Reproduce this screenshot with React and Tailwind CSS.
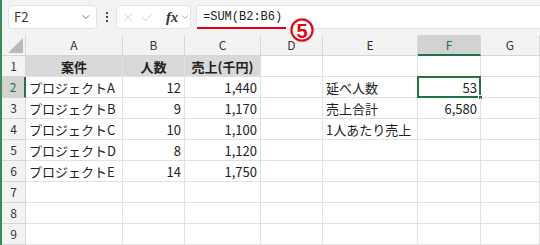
import { ChevronDown, X, Check } from "lucide-react"

const cols = ["A", "B", "C", "D", "E", "F", "G"]

const rows = [
  { n: 1, a: "案件", b: "人数", c: "売上(千円)", head: true },
  { n: 2, a: "プロジェクトA", b: "12", c: "1,440", e: "延べ人数", f: "53" },
  { n: 3, a: "プロジェクトB", b: "9", c: "1,170", e: "売上合計", f: "6,580" },
  { n: 4, a: "プロジェクトC", b: "10", c: "1,100", e: "1人あたり売上" },
  { n: 5, a: "プロジェクトD", b: "8", c: "1,120" },
  { n: 6, a: "プロジェクトE", b: "14", c: "1,750" },
  { n: 7 },
  { n: 8 },
  { n: 9 },
]

const grid = "grid grid-cols-[24px_97px_62px_76px_62px_95px_63px_1fr] auto-rows-[21px]"
const cell = "h-[21px] border-r border-b border-[#e1e1e1] flex items-center px-[3px] text-[13px] leading-none text-[#222] whitespace-nowrap overflow-hidden"
const rowHead = "h-[21px] bg-[#f3f3f3] border-r border-b border-[#d6d6d6] flex items-center justify-center text-[12px] leading-none text-[#333]"

function Toolbar() {
  return (
    <div className="relative h-[35px] bg-[#f3f3f3] flex items-start pt-[5px] pl-[6px]">
      <div className="w-[89px] h-[24px] bg-white rounded-[4px] border border-[#e3e3e3] flex items-center justify-between pl-[5px] pr-[4px]">
        <span className="text-[13px] text-[#333]">F2</span>
        <ChevronDown size={12} strokeWidth={1.6} className="text-[#555]" />
      </div>
      <div className="w-[19px] h-[24px] flex flex-col items-center justify-center gap-[2px]">
        <span className="w-[2px] h-[2px] bg-[#444]" />
        <span className="w-[2px] h-[2px] bg-[#444]" />
        <span className="w-[2px] h-[2px] bg-[#444]" />
      </div>
      <div className="w-[75px] h-[24px] bg-white rounded-[4px] border border-[#e3e3e3] flex items-center pl-[4px]">
        <X size={15} strokeWidth={1} className="text-[#b5b5b5]" />
        <Check size={15} strokeWidth={1} className="text-[#b5b5b5] ml-[5px]" />
        <span className="ml-[11px] text-[15px] italic font-semibold text-[#333] font-['Liberation_Serif',serif]">fx</span>
        <ChevronDown size={10} strokeWidth={1.5} className="text-[#777] ml-[2px]" />
      </div>
      <div className="relative ml-[5px] flex-1 h-[24px] bg-white rounded-l-[4px] border border-r-0 border-[#e3e3e3] flex items-center pl-[6px]">
        <span className="text-[12px] text-[#222] font-['Liberation_Mono',monospace]">=SUM(B2:B6)</span>
        <div className="absolute left-0 top-[21px] w-[89px] h-[2px] bg-[#e60012]" />
      </div>
      <svg className="absolute left-[287px] top-[17px] w-[26px] h-[26px]" viewBox="0 0 26 26">
        <circle cx="13" cy="13" r="12" fill="white" stroke="#c4c4c4" strokeWidth="1" />
        <circle cx="13" cy="13" r="10.5" fill="white" stroke="#e60012" strokeWidth="2" />
        <text x="13" y="20.5" textAnchor="middle" fontSize="20" fontWeight="700" fill="#e60012" fontFamily="Liberation Sans, sans-serif">5</text>
      </svg>
    </div>
  )
}

export default function App() {
  return (
    <div className="w-[540px] h-[245px] overflow-hidden bg-white border-l-2 border-[#3c8a5c] font-['Noto_Sans_CJK_JP',sans-serif]">
      <Toolbar />
      <div className={grid}>
        <div className="h-[21px] bg-[#f3f3f3] border-r border-b border-[#d6d6d6] relative">
          <div className="absolute right-[2px] bottom-[2px] w-0 h-0 border-l-[15px] border-l-transparent border-b-[15px] border-b-[#b9b9b9]" />
        </div>
        {cols.map((c) => (
          <div
            key={c}
            className={
              c === "F"
                ? "h-[21px] bg-[#d2d2d2] border-r border-[#d6d6d6] border-b-2 border-b-[#217346] flex items-center justify-center text-[12px] leading-none text-[#217346]"
                : "h-[21px] bg-[#f3f3f3] border-r border-b border-[#d6d6d6] flex items-center justify-center text-[12px] leading-none text-[#333]"
            }
          >
            {c}
          </div>
        ))}
        {rows.map((r) => (
          <Row key={r.n} r={r} />
        ))}
      </div>
    </div>
  )
}

function Row({ r }) {
  const sel = r.n === 2
  return (
    <>
      <div
        className={
          sel
            ? "h-[21px] bg-[#d2d2d2] border-b border-[#d6d6d6] border-r-2 border-r-[#217346] flex items-center justify-center text-[12px] leading-none text-[#217346]"
            : rowHead
        }
      >
        {r.n}
      </div>
      {r.head ? (
        <>
          <div className={`${cell} bg-[#d9d9d9] justify-center font-bold`}>{r.a}</div>
          <div className={`${cell} bg-[#d9d9d9] justify-center font-bold`}>{r.b}</div>
          <div className={`${cell} bg-[#d9d9d9] justify-center font-bold`}>{r.c}</div>
        </>
      ) : (
        <>
          <div className={`${cell} text-[12.5px]`}>{r.a}</div>
          <div className={`${cell} justify-end`}>{r.b}</div>
          <div className={`${cell} justify-end`}>{r.c}</div>
        </>
      )}
      <div className={cell} />
      <div className={cell}>{r.e}</div>
      <div className={`${cell} justify-end relative overflow-visible`}>
        {r.f}
        {sel && (
          <div className="absolute -left-px -top-px -right-px -bottom-px border-2 border-[#217346]">
            <div className="absolute -right-[4px] -bottom-[4px] w-[5px] h-[5px] bg-[#217346] border border-white" />
          </div>
        )}
      </div>
      <div className={cell} />
    </>
  )
}
